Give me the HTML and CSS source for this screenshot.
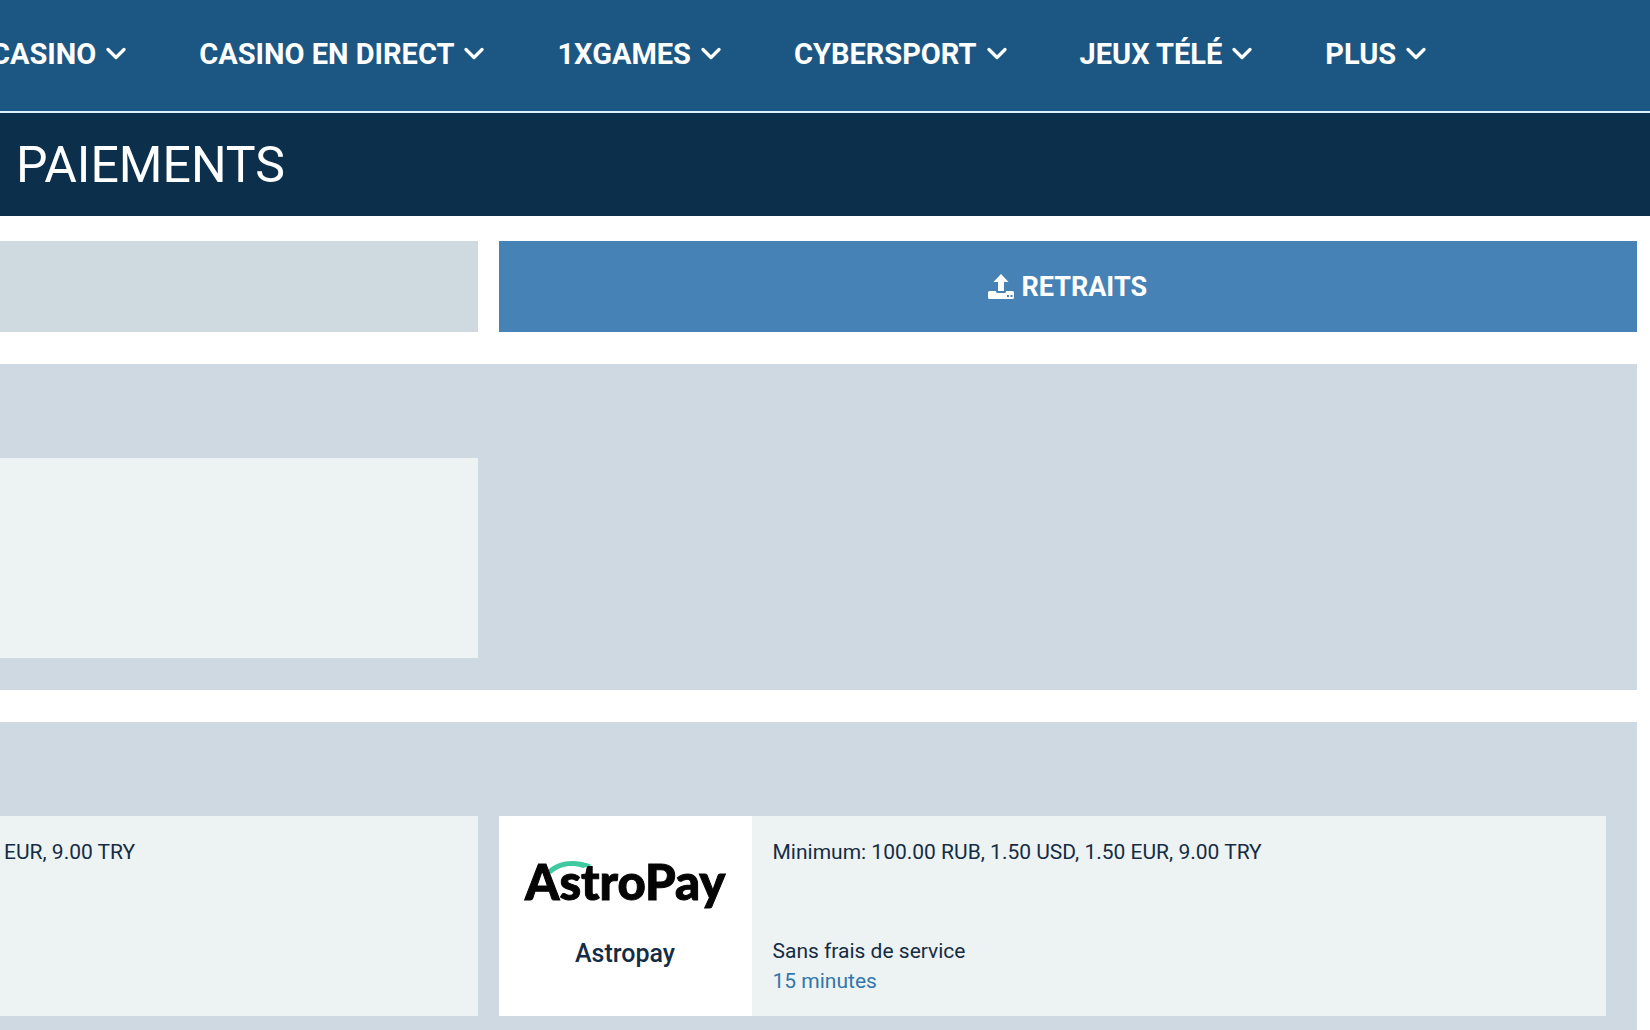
FILE: index.html
```html
<!DOCTYPE html>
<html lang="fr">
<head>
<meta charset="utf-8">
<title>Paiements</title>
<link rel="stylesheet" href="styles.css">
</head>
<body>
<svg class="sprite" aria-hidden="true">
  <symbol id="chevron" viewBox="0 0 20 14"><path d="M2 2.500 10 10.500 18 2.500" fill="none" stroke="currentColor" stroke-width="3.200" stroke-linecap="round" stroke-linejoin="round"/></symbol>
</svg>
<nav class="nav" aria-label="Navigation principale">
  <button class="nav-item" type="button">CASINO<svg class="chevron"><use href="#chevron"/></svg></button>
  <button class="nav-item" type="button">CASINO EN DIRECT<svg class="chevron"><use href="#chevron"/></svg></button>
  <button class="nav-item" type="button">1XGAMES<svg class="chevron"><use href="#chevron"/></svg></button>
  <button class="nav-item" type="button">CYBERSPORT<svg class="chevron"><use href="#chevron"/></svg></button>
  <button class="nav-item" type="button">JEUX TÉLÉ<svg class="chevron"><use href="#chevron"/></svg></button>
  <button class="nav-item" type="button">PLUS<svg class="chevron"><use href="#chevron"/></svg></button>
</nav>
<header class="title-bar"><h1 class="title">PAIEMENTS</h1></header>
<main class="content">
  <div class="columns tabs">
    <div class="tab"></div>
    <button class="tab tab-active" type="button">
      <svg class="upload" viewBox="0 0 26 26" aria-hidden="true">
        <path fill="currentColor" d="M13 0 20.500 8H16v8.500q0 .5-.5.5h-5q-.5 0-.5-.5V8H5.500z"/>
        <path fill="currentColor" fill-rule="evenodd" d="M1.500 17H8v.5q0 1.500 1.500 1.500h7q1.500 0 1.500-1.500V17h6.500q1.500 0 1.500 1.500v5q0 1.500-1.500 1.500h-23Q0 25 0 23.500v-5Q0 17 1.500 17zM19 21v2h2v-2zM22.500 21v2h2v-2z"/>
      </svg>
      RETRAITS
    </button>
  </div>
  <section class="panel">
    <div class="columns">
      <article class="card"></article>
    </div>
  </section>
  <section class="panel panel-last">
    <div class="columns">
      <article class="card"><div class="details details-left"><p class="line">EUR, 9.00 TRY</p></div></article>
      <article class="card">
        <div class="brand">
          <svg class="logo" viewBox="0 0 200 56" role="img" aria-label="AstroPay">
            <path d="M23 11C34 0 52 0 67 6L58 9C46 5 35 7 26 15z" fill="#3fc9a0"/>
            <text class="logo-text" x="0" y="41">AstroPay</text>
          </svg>
          <h2 class="name">Astropay</h2>
        </div>
        <div class="details">
          <p class="line">Minimum: 100.00 RUB, 1.50 USD, 1.50 EUR, 9.00 TRY</p>
          <div>
            <p class="line">Sans frais de service</p>
            <p class="line line-time">15 minutes</p>
          </div>
        </div>
      </article>
    </div>
  </section>
</main>
</body>
</html>
```
FILE: styles.css
```css
* { box-sizing: border-box; }

body {
  margin: 0;
  min-height: 100vh;
  display: flex;
  flex-direction: column;
  overflow-x: hidden;
  background: #fff;
  color: #152c44;
  font-family: Roboto, "Liberation Sans", sans-serif;
}

h1, h2, p { margin: 0; }

.sprite { display: none; }

button {
  border: 0;
  padding: 0;
  font: inherit;
  color: #fff;
  background: none;
  cursor: pointer;
}

.nav {
  display: flex;
  gap: 73px;
  height: 113px;
  padding-bottom: 4px;
  margin-left: -9px;
  background: #1c5784;
  border-bottom: 2px solid #d9f2fb;
}

.nav-item {
  display: flex;
  flex: none;
  align-items: center;
  gap: 10px;
  font-size: 29px;
  font-weight: 700;
  white-space: nowrap;
}

.chevron { width: 20px; height: 14px; }

.title-bar {
  display: flex;
  align-items: center;
  height: 103px;
  padding: 0 16px;
  background: #0c304c;
}

.title { color: #fff; font-size: 50px; font-weight: 400; }

.content {
  flex: 1;
  display: flex;
  flex-direction: column;
  padding: 25px 13px 0 0;
}

.columns {
  display: grid;
  grid-template-columns: calc(29vw - 1px) 1fr;
  gap: 21px;
}

.tab {
  display: flex;
  align-items: center;
  justify-content: center;
  gap: 7px;
  height: 91px;
  background: #cfd9e0;
}

.tab-active {
  background: #4682b6;
  font-size: 27px;
  font-weight: 700;
}

.upload { width: 26px; height: 26px; }

.panel {
  margin-top: 32px;
  padding: 94px 31px 32px 0;
  background: #cfd9e2;
}

.panel-last { flex: 1; padding-bottom: 0; }

.card {
  display: flex;
  height: 200px;
  background: #edf3f2;
}

.brand {
  display: flex;
  flex-direction: column;
  align-items: center;
  width: 253px;
  padding-top: 43px;
  background: #fff;
}

.logo { width: 200px; height: 56px; overflow: visible; }

.logo-text {
  font: 900 49px Lato, sans-serif;
  fill: #050505;
  stroke: #050505;
  stroke-width: 1px;
}

.name {
  margin-top: 25px;
  font-size: 25px;
  line-height: 28px;
  font-weight: 500;
}

.details {
  flex: 1;
  display: flex;
  flex-direction: column;
  justify-content: space-between;
  padding: 21px 21px 20px;
}

.details-left { padding-left: 4px; }

.line { font-size: 21px; line-height: 30px; }

.line-time { color: #3376ab; }
```
